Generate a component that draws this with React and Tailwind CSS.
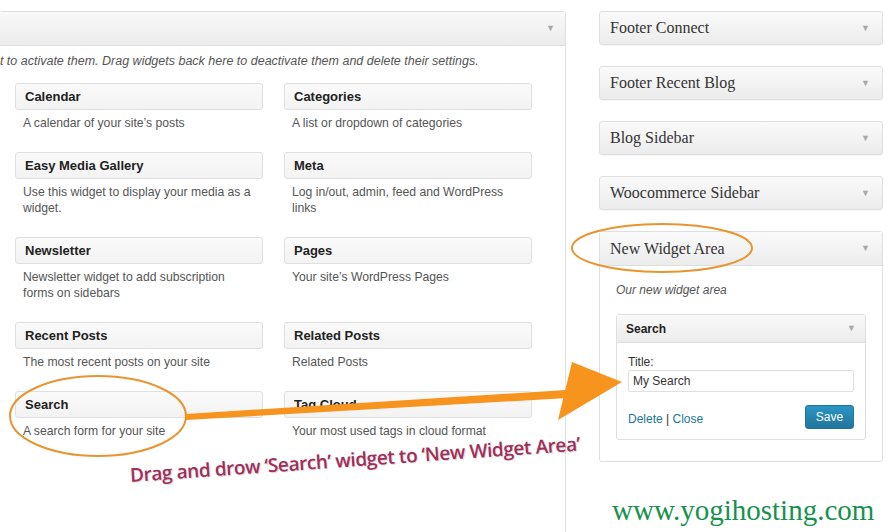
import React from 'react';

const Tri = () => <span className="text-[#a8a8a8] text-[9px] leading-none">▼</span>;

const widgets = [
  ['Calendar', 'A calendar of your site’s posts', 'Categories', 'A list or dropdown of categories'],
  ['Easy Media Gallery', 'Use this widget to display your media as a widget.', 'Meta', 'Log in/out, admin, feed and WordPress links'],
  ['Newsletter', 'Newsletter widget to add subscription forms on sidebars', 'Pages', 'Your site’s WordPress Pages'],
  ['Recent Posts', 'The most recent posts on your site', 'Related Posts', 'Related Posts'],
  ['Search', 'A search form for your site', 'Tag Cloud', 'Your most used tags in cloud format'],
];

const Widget = ({ title, desc }) => (
  <div>
    <div className="h-[27px] border border-[#dfdfdf] rounded-[3px] bg-gradient-to-b from-[#fafafa] to-[#f3f3f3] flex items-center px-[9px] text-[13px] font-bold text-[#222]">
      {title}
    </div>
    <p className="mt-[5px] pl-[8px] pr-[7px] text-[12.2px] leading-[16px] text-[#555]">{desc}</p>
  </div>
);

const Sidebar = ({ title }) => (
  <div className="h-[34px] border border-[#dfdfdf] rounded-[3px] bg-gradient-to-b from-[#fafafa] to-[#ececec] flex items-center justify-between pl-[10px] pr-[12px] shadow-[0_1px_1px_rgba(0,0,0,0.04)]">
    <span className="text-[16px] text-[#333]" style={{ fontFamily: '"Liberation Serif", serif' }}>{title}</span>
    <Tri />
  </div>
);

export default function App() {
  return (
    <div className="relative w-[888px] h-[532px] overflow-hidden bg-white" style={{ fontFamily: '"Liberation Sans", Arial, sans-serif' }}>
      <div className="flex pt-[11px]">
        {/* available widgets */}
        <div className="w-[567px] ml-[-1px] shrink-0 border border-[#dfdfdf] rounded-[3px] h-[560px]">
          <div className="h-[34px] bg-gradient-to-b from-[#f9f9f9] to-[#ececec] border-b border-[#dfdfdf] flex items-center justify-end pr-[10px]">
            <Tri />
          </div>
          <p className="pt-[7px] ml-[-14px] text-[12.5px] leading-[16px] italic text-[#555] whitespace-nowrap">
            ght to activate them. Drag widgets back here to deactivate them and delete their settings.
          </p>
          <div className="grid grid-cols-2 gap-x-[21px] gap-y-[21px] pl-[15px] pr-[33px] mt-[14px]">
            {widgets.map(([t1, d1, t2, d2]) => (
              <React.Fragment key={t1}>
                <Widget title={t1} desc={d1} />
                <Widget title={t2} desc={d2} />
              </React.Fragment>
            ))}
          </div>
        </div>

        {/* sidebars */}
        <div className="ml-[33px] w-[284px] flex flex-col gap-[21px]">
          <Sidebar title="Footer Connect" />
          <Sidebar title="Footer Recent Blog" />
          <Sidebar title="Blog Sidebar" />
          <Sidebar title="Woocommerce Sidebar" />
          <div className="border border-[#dfdfdf] rounded-[3px]">
            <div className="h-[34px] bg-gradient-to-b from-[#fafafa] to-[#ececec] border-b border-[#dfdfdf] flex items-center justify-between pl-[10px] pr-[12px]">
              <span className="text-[16px] text-[#333]" style={{ fontFamily: '"Liberation Serif", serif' }}>New Widget Area</span>
              <Tri />
            </div>
            <div className="px-[16px] pt-[16px] pb-[21px]">
              <p className="text-[12px] italic text-[#555] leading-[16px]">Our new widget area</p>
              <div className="mt-[16px] border border-[#dfdfdf] rounded-[3px]">
                <div className="h-[28px] bg-gradient-to-b from-[#f9f9f9] to-[#ececec] border-b border-[#dfdfdf] flex items-center justify-between pl-[9px] pr-[9px]">
                  <span className="text-[12px] font-bold text-[#222]">Search</span>
                  <Tri />
                </div>
                <div className="px-[11px] pt-[12px] pb-[10px]">
                  <div className="text-[12px] text-[#333] leading-[14px]">Title:</div>
                  <div className="mt-[1px] h-[22px] border border-[#dfdfdf] rounded-[2px] flex items-center px-[4px] text-[12px] text-[#333]">My Search</div>
                  <div className="mt-[13px] flex items-center justify-between">
                    <span className="text-[12px] text-[#21759b] mt-[4px]">Delete <span className="text-[#333]">|</span> Close</span>
                    <span className="h-[24px] w-[49px] rounded-[3px] bg-gradient-to-b from-[#2a95c5] to-[#21759b] border border-[#21759b] text-white text-[12px] flex items-center justify-center">Save</span>
                  </div>
                </div>
              </div>
            </div>
          </div>
        </div>
      </div>

      {/* annotations */}
      <svg className="absolute inset-0" width="888" height="532" viewBox="0 0 888 532">
        <ellipse cx="98" cy="416" rx="88" ry="40" fill="none" stroke="#e8952f" strokeWidth="2" />
        <ellipse cx="662" cy="248" rx="90" ry="24" fill="none" stroke="#e8952f" strokeWidth="2" />
        <polygon points="186,414 566,390 568,398 186,420" fill="#f7941d" />
        <polygon points="572,362 622,382 558,420" fill="#f7941d" />
      </svg>
      <div
        className="absolute left-[130px] top-[461px] text-[19px] font-semibold text-[#a12d5a] whitespace-nowrap origin-left -rotate-[4deg] tracking-[-0.4px] [text-shadow:1px_1px_1px_rgba(0,0,0,0.15)]"
        style={{ fontFamily: '"Open Sans", sans-serif' }}
      >
        Drag and drow ‘Search’ widget to ‘New Widget Area’
      </div>
      <div
        className="absolute left-[612px] top-[495px] text-[29px] leading-[30px] text-[#17914e]"
        style={{ fontFamily: '"Liberation Serif", serif' }}
      >
        www.yogihosting.com
      </div>
    </div>
  );
}
